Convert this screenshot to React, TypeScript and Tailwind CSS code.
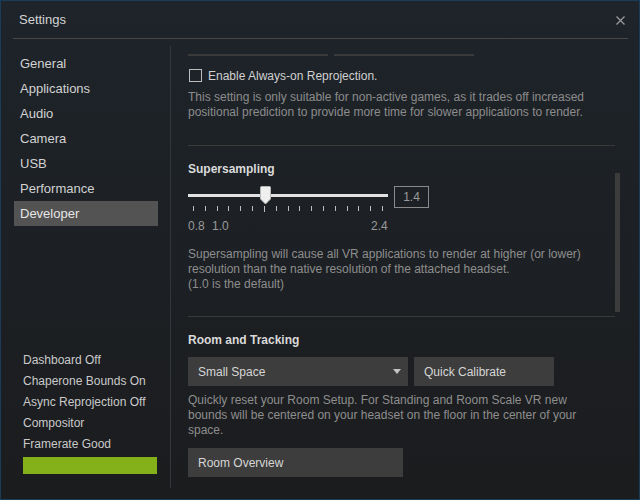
import React from "react";

const navItems = ["General", "Applications", "Audio", "Camera", "USB", "Performance", "Developer"];
const statusItems = ["Dashboard Off", "Chaperone Bounds On", "Async Reprojection Off", "Compositor", "Framerate Good"];

export default function App() {
  const ticks = Array.from({ length: 17 }, (_, i) => i);
  return (
    <div
      className="w-[640px] h-[500px] border border-[#1b3c58] bg-linear-to-b from-[#1e242a] to-[#1b1c1e] flex flex-col overflow-hidden text-[12px] text-[#d0d0d0]"
      style={{ fontFamily: '"Liberation Sans", Arial, sans-serif' }}
    >
      {/* Header */}
      <div className="h-[37px] flex items-center justify-between pl-[18px] pr-[14px] shrink-0">
        <span className="text-[13px] text-[#d4d4d4] mt-[1px]">Settings</span>
        <svg width="9" height="9" viewBox="0 0 9 9" className="mt-[1px]">
          <path d="M0.5 0.5 L8.5 8.5 M8.5 0.5 L0.5 8.5" stroke="#9a9a9a" strokeWidth="1.3" />
        </svg>
      </div>
      <div className="h-[1px] bg-[#474747] ml-[12px] mr-[11px] shrink-0" />

      {/* Body */}
      <div className="flex flex-1 min-h-0">
        {/* Sidebar */}
        <div className="w-[170px] shrink-0 mt-[7px] mb-[11px] border-r border-[#33373b] flex flex-col justify-between pt-[5px] pb-[14px]">
          <div className="flex flex-col pl-[13px]">
            {navItems.map((item) => (
              <div
                key={item}
                className={`w-[144px] h-[25px] flex items-center pl-[6px] text-[13px] ${
                  item === "Developer" ? "bg-[#535353] text-[#e6e6e6]" : "text-[#d2d2d2]"
                }`}
              >
                {item}
              </div>
            ))}
          </div>
          <div className="flex flex-col pl-[22px]">
            {statusItems.map((s) => (
              <div key={s} className="h-[21px] flex items-center text-[12px] text-[#cacaca]">
                {s}
              </div>
            ))}
            <div className="mt-[3px] w-[134px] h-[17px] bg-[#84b01a]" />
          </div>
        </div>

        {/* Content */}
        <div className="relative flex-1 min-w-0 overflow-hidden pl-[17px] pt-[15px]">
          {/* partially scrolled-off buttons */}
          <div className="flex gap-[6px]">
            <div className="w-[140px] h-[2px] bg-[#3a3a3a]" />
            <div className="w-[140px] h-[2px] bg-[#3a3a3a]" />
          </div>

          {/* Checkbox */}
          <div className="mt-[13px] flex items-center h-[13px]">
            <div className="ml-[1px] w-[13px] h-[13px] border border-[#bdbdbd]" />
            <span className="ml-[6px] text-[12px] text-[#d0d0d0]">Enable Always-on Reprojection.</span>
          </div>
          <div className="mt-[8px] text-[12px] leading-[15px] text-[#8c8c8c]">
            <div>This setting is only suitable for non-active games, as it trades off increased</div>
            <div>positional prediction to provide more time for slower applications to render.</div>
          </div>

          <div className="mt-[25px] w-[427px] h-[1px] bg-[#3a3a3a]" />

          {/* Supersampling */}
          <div className="mt-[16px] text-[12px] leading-[15px] font-bold text-[#dadada]">Supersampling</div>
          <div className="mt-[9px] flex items-start gap-[6px]">
            <div className="w-[200px] flex flex-col">
              <div className="relative h-[18px] flex items-center">
                <div className="w-full h-[3px] bg-[#e2e2e2]" />
                <svg width="11" height="19" viewBox="0 0 11 19" className="absolute left-[72px] top-0">
                  <path d="M0.5 1.5 Q0.5 0.5 1.5 0.5 L9.5 0.5 Q10.5 0.5 10.5 1.5 L10.5 13 L5.5 18 L0.5 13 Z" fill="#efefef" stroke="#b8b8b8" strokeWidth="1" />
                </svg>
              </div>
              <div className="mt-[2px] flex justify-between px-[5px] h-[5px]">
                {ticks.map((t) => (
                  <div key={t} className={`w-[1px] bg-[#bdbdbd] ${t === 6 ? "h-[6px]" : "h-[5px]"}`} />
                ))}
              </div>
            </div>
            <div className="w-[35px] h-[22px] border border-[#8a8a8a] flex items-center justify-center text-[12px] text-[#9a9a9a]">
              1.4
            </div>
          </div>
          <div className="relative mt-[8px] h-[15px] text-[12px] leading-[15px] text-[#9a9a9a]">
            <span className="absolute left-0">0.8</span>
            <span className="absolute left-[24px]">1.0</span>
            <span className="absolute left-[183px]">2.4</span>
          </div>
          <div className="mt-[13px] text-[12px] leading-[15px] text-[#8e8e8e]">
            <div>Supersampling will cause all VR applications to render at higher (or lower)</div>
            <div>resolution than the native resolution of the attached headset.</div>
            <div>(1.0 is the default)</div>
          </div>

          <div className="mt-[24px] w-[427px] h-[1px] bg-[#3a3a3a]" />

          {/* Room and Tracking */}
          <div className="mt-[16px] text-[12px] leading-[15px] font-bold text-[#dadada]">Room and Tracking</div>
          <div className="mt-[9px] flex gap-[6px]">
            <div className="w-[220px] h-[29px] bg-[#3d3d3d] flex items-center justify-between pl-[10px] pr-[7px] text-[12px] text-[#d6d6d6]">
              <span>Small Space</span>
              <svg width="8" height="5" viewBox="0 0 8 5">
                <path d="M0 0 L8 0 L4 5 Z" fill="#c4c4c4" />
              </svg>
            </div>
            <div className="w-[140px] h-[29px] bg-[#3d3d3d] flex items-center pl-[10px] text-[12px] text-[#d6d6d6]">
              Quick Calibrate
            </div>
          </div>
          <div className="mt-[7px] text-[12px] leading-[15px] text-[#8e8e8e]">
            <div>Quickly reset your Room Setup. For Standing and Room Scale VR new</div>
            <div>bounds will be centered on your headset on the floor in the center of your</div>
            <div>space.</div>
          </div>
          <div className="mt-[10px] w-[215px] h-[29px] bg-[#3d3d3d] flex items-center pl-[10px] text-[12px] text-[#d6d6d6]">
            Room Overview
          </div>

          {/* Scrollbar */}
          <div className="absolute left-[444px] top-[134px] w-[5px] h-[139px] bg-[#3c3c3c]" />
        </div>
      </div>
    </div>
  );
}
